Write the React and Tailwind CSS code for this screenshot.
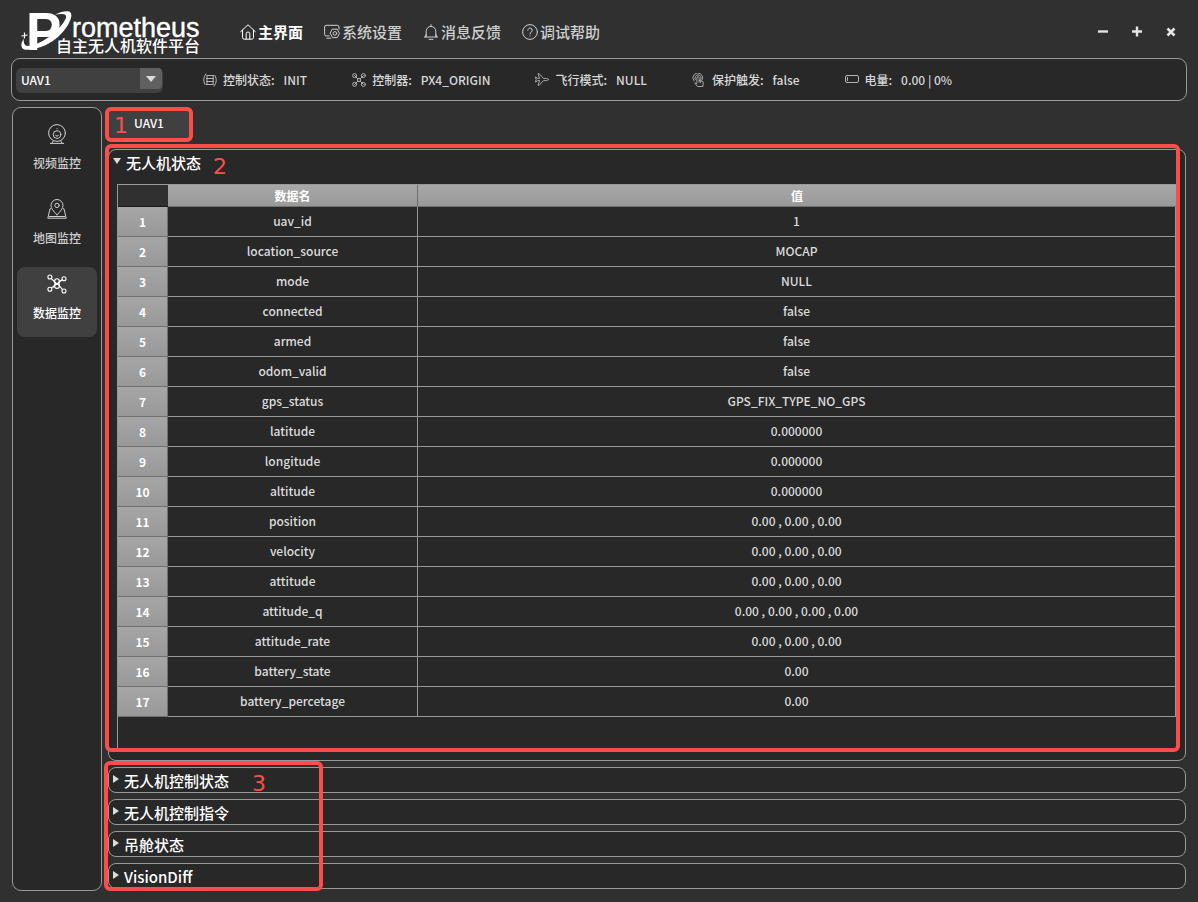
import React, { useState } from "react";

const rows = [
  ["uav_id", "1"],
  ["location_source", "MOCAP"],
  ["mode", "NULL"],
  ["connected", "false"],
  ["armed", "false"],
  ["odom_valid", "false"],
  ["gps_status", "GPS_FIX_TYPE_NO_GPS"],
  ["latitude", "0.000000"],
  ["longitude", "0.000000"],
  ["altitude", "0.000000"],
  ["position", "0.00 , 0.00 , 0.00"],
  ["velocity", "0.00 , 0.00 , 0.00"],
  ["attitude", "0.00 , 0.00 , 0.00"],
  ["attitude_q", "0.00 , 0.00 , 0.00 , 0.00"],
  ["attitude_rate", "0.00 , 0.00 , 0.00"],
  ["battery_state", "0.00"],
  ["battery_percetage", "0.00"],
];

function Icon({ className, box = 16, width = 1, children }) {
  return (
    <svg
      className={className}
      viewBox={`0 0 ${box} ${box}`}
      fill="none"
      stroke="currentColor"
      strokeWidth={width}
      strokeLinecap="round"
      strokeLinejoin="round"
      aria-hidden="true"
    >
      {children}
    </svg>
  );
}

const HomeIcon = () => (
  <Icon className="size-4 shrink-0">
    <path d="M0.7 7.6 8 0.8l7.3 6.8M2.5 6.2v7.2q0 1.8 1.8 1.8h7.4q1.8 0 1.8-1.8V6.2" />
    <path d="M6.2 15V9.6q0-1.6 1.8-1.6t1.8 1.6V15" />
  </Icon>
);

const SettingsIcon = () => (
  <Icon className="size-4 shrink-0">
    <path d="M15 5.2V3q0-1.7-1.7-1.7H2.2Q.6 1.3.6 3v7.2q0 1.7 1.6 1.7h3M2.8 14.2h4" />
    <path d="M8.6 5.2h4.6l2.3 4.2-2.3 4.2H8.6L6.3 9.4z" />
    <circle cx="10.9" cy="9.4" r="1.8" />
  </Icon>
);

const BellIcon = () => (
  <Icon className="size-4 shrink-0">
    <path d="M1.8 13h12.4M3.2 13V7.2a4.8 4.8 0 0 1 9.6 0V13M8 2.2V.7M3.2 10.5 1.8 13M12.8 10.5l1.4 2.5M6 15.3h4" />
  </Icon>
);

const HelpIcon = () => (
  <Icon className="size-4 shrink-0">
    <circle cx="8" cy="8" r="7.4" />
    <path d="M5.8 6.2a2.2 2.2 0 1 1 3.5 1.8Q8 8.8 8 10M8 11.9v.2" />
  </Icon>
);

const statusIcon = "size-3.5 shrink-0 text-[#b4b4b4]";

const ControlStateIcon = () => (
  <Icon className={statusIcon} box={14}>
    <path d="M4.2 2.500h6.600M3.500 5.500h7M3.500 8.500h7M3.200 11.500h6.600M4 2.500v9M10.200 2.500v9" />
    <path d="M3 .8Q-1.200 6 2 11.500M11 13.200Q15.200 8 12 2.500" />
  </Icon>
);

const DroneIcon = () => (
  <Icon className={statusIcon} box={14}>
    <circle cx="2.6" cy="2.6" r="2" />
    <circle cx="11.4" cy="2.6" r="2" />
    <circle cx="2.6" cy="11.4" r="2" />
    <circle cx="11.4" cy="11.4" r="2" />
    <path d="m2.6 2.6 3 3h2.8l3-3M2.6 11.4l3-3h2.8l3 3M5.6 5.6v2.8M8.4 5.6v2.8" />
  </Icon>
);

const PlaneIcon = () => (
  <Icon className={statusIcon} box={14} width={0.9}>
    <path d="M13.5 6.500q-.8-1.100-2.200-1.100H8.400L4.200.7H3l1.600 4.700H2.400L1.100 4H.4L1.200 6.500.4 9h.7l1.300-1.400h2.200L3 12.300h1.200l4.200-4.700h2.900q1.400 0 2.200-1.100z" />
  </Icon>
);

const TouchIcon = () => (
  <Icon className={statusIcon} box={14} width={0.9}>
    <path d="M4.900 9.500V4.700a1.100 1.100 0 0 1 2.200 0V7.400l3 .8q1.300.4 1.200 1.700l-.4 3.600H5.600L2.800 10.200q.8-1 2.100.5" />
    <path d="M3.300 6.500a3.100 3.100 0 1 1 5.400 0M2 8A4.900 4.900 0 1 1 10.200 7" />
    <path d="M7.100 7.400v2M8.700 7.900v1.800" />
  </Icon>
);

const BatteryIcon = () => (
  <Icon className={statusIcon} box={14}>
    <rect x="0.5" y="2.500" width="13" height="7" rx="1.5" />
    <path d="M2.5 4.500v3" />
  </Icon>
);

const CameraIcon = () => (
  <Icon className="size-5" box={20}>
    <circle cx="10" cy="9" r="8.4" />
    <circle cx="10" cy="10.6" r="3.8" />
    <path d="M8.600 11.200a1.500 1.500 0 0 0 2.800 0M10 4.600v.2M6.2 17l-1.4 2.3M13.8 17l1.4 2.3M3.4 19.4h13.2" />
  </Icon>
);

const MapIcon = () => (
  <Icon className="size-5" box={20}>
    <path d="M10 15.8Q4 10.2 4 6.5a6 6 0 0 1 12 0q0 3.700-6 9.300z" />
    <circle cx="10" cy="6.4" r="2.2" />
    <path d="M3.600 9.8H3L.8 19.2h18.400L17 9.8h-.6M2.400 17.500h15.200" />
  </Icon>
);

const DataIcon = () => (
  <Icon className="size-5" box={20} width={1.1}>
    <circle cx="2.9" cy="3" r="2" />
    <circle cx="17" cy="4.8" r="2" />
    <circle cx="2.9" cy="15.2" r="2" />
    <circle cx="17" cy="17" r="2" />
    <circle cx="10" cy="7.2" r="2.4" />
    <circle cx="10" cy="12" r="2.4" />
    <path d="M4.300 4.400 8 8.400l4 3 3.500 4.200M15.200 5.800 12 8.200l-4 3-3.500 2.700M6.800 6.500l1.200 2v2.700l-1.200 2M13.200 6.500l-1.200 2v2.700l1.200 2" />
  </Icon>
);

function Logo() {
  return (
    <svg
      className="h-11 w-[182px] shrink-0 overflow-visible fill-white"
      viewBox="20 10 182 44"
      role="img"
      aria-label="Prometheus 自主无人机软件平台"
    >
      <text x="26" y="50" className="font-['Liberation_Sans',sans-serif] text-[53px] font-bold">P</text>
      <path d="M55 14.500Q64 10 69.500 11.500 74 14 68 25 60 38 46 45 32 51 24 49.500 18.500 46 24 38.500 22.500 44.500 27 46 36 46 49 37 62 27 66 18 67 14 62 14 58 14 55 14.500z" />
      <path d="M24.500 32.500v6M21.500 36l6-1" stroke="white" strokeWidth="1.200" />
      <text x="72" y="37" className="font-['Liberation_Sans',sans-serif] text-[27px]" stroke="white" strokeWidth="0.4">rometheus</text>
      <text x="56" y="52" className="font-['Noto_Sans_CJK_SC',sans-serif] text-[16px] font-medium">自主无人机软件平台</text>
    </svg>
  );
}

const navItems = [
  { label: "主界面", icon: HomeIcon, active: true },
  { label: "系统设置", icon: SettingsIcon },
  { label: "消息反馈", icon: BellIcon },
  { label: "调试帮助", icon: HelpIcon },
];

const statusItems = [
  { label: "控制状态:", value: "INIT", icon: ControlStateIcon },
  { label: "控制器:", value: "PX4_ORIGIN", icon: DroneIcon },
  { label: "飞行模式:", value: "NULL", icon: PlaneIcon },
  { label: "保护触发:", value: "false", icon: TouchIcon },
  { label: "电量:", value: "0.00 | 0%", icon: BatteryIcon },
];

const sideItems = [
  { label: "视频监控", icon: CameraIcon },
  { label: "地图监控", icon: MapIcon },
  { label: "数据监控", icon: DataIcon },
];

const collapsed = ["无人机控制状态", "无人机控制指令", "吊舱状态", "VisionDiff"];

function Header() {
  return (
    <header className="flex h-[58px] items-center pt-1.5 pr-[17px] pl-5">
      <Logo />
      <nav className="ml-[38px] flex gap-[21px]">
        {navItems.map(({ label, icon: NavIcon, active }) => (
          <a
            key={label}
            href="#"
            className={
              active
                ? "flex items-center gap-0.5 text-[15px] font-bold whitespace-nowrap text-white"
                : "flex items-center gap-0.5 text-[15px] font-medium whitespace-nowrap text-[#cfcfcf]"
            }
          >
            <NavIcon />
            {label}
          </a>
        ))}
      </nav>
      <div className="ml-auto flex gap-[14px] text-[#e4e4e4]">
        <button type="button" aria-label="最小化" className="flex size-5 items-center justify-center">
          <Icon className="size-3" box={12} width={2.4}><path strokeLinecap="butt" d="M1 5.500h10" /></Icon>
        </button>
        <button type="button" aria-label="最大化" className="flex size-5 items-center justify-center">
          <Icon className="size-3" box={12} width={2.4}><path strokeLinecap="butt" d="M1 5.500h10M6 .5v10" /></Icon>
        </button>
        <button type="button" aria-label="关闭" className="flex size-5 items-center justify-center">
          <Icon className="size-3" box={12} width={2.6}><path strokeLinecap="butt" d="m2.500 2.500 7 7M9.500 2.500l-7 7" /></Icon>
        </button>
      </div>
    </header>
  );
}

function StatusBar() {
  return (
    <div className="mx-[11px] flex h-[43px] items-center rounded-[9px] border border-[#999] bg-[#282828] pl-1">
      <div className="relative w-[147px] shrink-0">
        <select
          aria-label="UAV"
          className="h-[25px] w-full appearance-none rounded-md bg-[#404040] pl-[5px] text-xs font-medium text-white"
        >
          <option>UAV1</option>
        </select>
        <span className="pointer-events-none absolute top-0.5 right-px flex h-[21px] w-[22px] items-center justify-center rounded-r bg-[#606060]">
          <svg className="h-1.5 w-2.5 fill-[#dcdcdc]" viewBox="0 0 10 6" aria-hidden="true"><path d="M0 0h10L5 6z" /></svg>
        </span>
      </div>
      <dl className="ml-10 flex gap-[45px] text-xs font-medium whitespace-nowrap text-[#d8d8d8]">
        {statusItems.map(({ label, value, icon: StatusIcon }) => (
          <div key={label} className="flex items-center">
            <StatusIcon />
            <dt className="ml-1.5">{label}</dt>
            <dd className="ml-[9px]">{value}</dd>
          </div>
        ))}
      </dl>
    </div>
  );
}

function Sidebar() {
  return (
    <aside className="flex w-[90px] shrink-0 flex-col gap-[5px] rounded-[9px] border border-[#999] bg-[#282828] px-1 py-[9px]">
      {sideItems.map(({ label, icon: SideIcon }, i) => (
        <button
          key={label}
          type="button"
          className={
            i === 2
              ? "flex h-[70px] flex-col items-center rounded-lg bg-[#404040] pt-[7px] text-xs leading-[18px] font-medium text-white"
              : "flex h-[70px] flex-col items-center rounded-lg pt-[7px] text-xs leading-[18px] font-medium text-[#cfcfcf]"
          }
        >
          <SideIcon />
          <span className="mt-2.5">{label}</span>
        </button>
      ))}
    </aside>
  );
}

function DataTable() {
  return (
    <table className="w-full table-fixed border-separate border-spacing-0 text-center text-xs font-medium text-[#dcdcdc]">
      <colgroup>
        <col className="w-[50px]" />
        <col className="w-[250px]" />
        <col />
      </colgroup>
      <thead>
        <tr className="h-[22px] text-white">
          <td className="border-b border-[#1c1c1c] bg-[#303030]" />
          <th scope="col" className="border-r border-b border-[#707070] bg-linear-to-b from-[#a8a8a8] to-[#999] p-0 font-bold">数据名</th>
          <th scope="col" className="border-b border-[#707070] bg-linear-to-b from-[#a8a8a8] to-[#999] p-0 font-bold">值</th>
        </tr>
      </thead>
      <tbody>
        {rows.map(([name, value], i) => (
          <tr key={name} className="h-[30px]">
            <th scope="row" className="border-r border-b border-[#707070] bg-linear-to-b from-[#a6a6a6] to-[#989898] p-0 font-bold text-white">{i + 1}</th>
            <td className="border-r border-b border-[#999] p-0 pb-0.5">{name}</td>
            <td className="border-r border-b border-[#999] p-0 pb-0.5">{value}</td>
          </tr>
        ))}
      </tbody>
    </table>
  );
}

export default function App() {
  const [open, setOpen] = useState(true);
  return (
    <div className="flex min-h-screen flex-col bg-[#303030] pb-[11px] font-['Noto_Sans_CJK_SC',sans-serif]">
      <Header />
      <StatusBar />
      <div className="mx-3 mt-1.5 flex flex-1 gap-[6px]">
        <Sidebar />
        <main className="flex min-w-0 flex-1 flex-col pb-0.5">
          <div className="h-[42px]">
            <div className="relative flex h-[35px] w-[84px] items-center">
              <button type="button" className="h-[31px] w-full rounded-md bg-[#404040] pr-0.5 pb-[3px] text-xs font-medium text-white">UAV1</button>
              <span className="pointer-events-none absolute inset-y-0 -right-px -left-[3px] rounded-md border-4 border-[#fc4d4a]" />
              <span className="pointer-events-none absolute top-[5px] left-1.5 font-['DejaVu_Sans',sans-serif] text-[22px] leading-7 text-[#fc4d4a]">1</span>
            </div>
          </div>
          <section className="relative flex min-h-[612px] flex-1 flex-col rounded-lg border border-[#999] bg-[#282828] px-2 pb-2.5">
            <button
              type="button"
              aria-expanded={open}
              onClick={() => setOpen(!open)}
              className="-ml-1 mb-2 flex h-[26px] items-center gap-[5px] text-[15px] font-medium text-white"
            >
              <svg className="mb-1 h-1.5 w-2 fill-[#dcdcdc]" viewBox="0 0 8 6" aria-hidden="true"><path d="M0 0h8L4 6z" /></svg>
              无人机状态
            </button>
            {open && (
              <div className="flex-1 border border-[#999]">
                <DataTable />
              </div>
            )}
            <span className="pointer-events-none absolute -top-1.5 right-[5px] bottom-2 -left-1 rounded-md border-4 border-[#fc4d4a]" />
            <span className="pointer-events-none absolute top-[3px] left-[104px] font-['DejaVu_Sans',sans-serif] text-[22px] leading-7 text-[#fc4d4a]">2</span>
          </section>
          <div className="relative mt-1.5 flex flex-col gap-1.5">
            {collapsed.map((title) => (
              <button
                key={title}
                type="button"
                aria-expanded="false"
                className="flex h-[26px] items-center gap-[5px] rounded-lg border border-[#999] bg-[#282828] pt-0.5 pl-1 text-[15px] font-medium text-white"
              >
                <svg className="mb-1 h-2 w-1.5 fill-[#dcdcdc]" viewBox="0 0 6 8" aria-hidden="true"><path d="M0 0l6 4-6 4z" /></svg>
                {title}
              </button>
            ))}
            <span className="pointer-events-none absolute -top-1.5 -bottom-0.5 -left-1 w-[219px] rounded-md border-4 border-[#fc4d4a]" />
            <span className="pointer-events-none absolute top-[3px] left-36 font-['DejaVu_Sans',sans-serif] text-[22px] leading-7 text-[#fc4d4a]">3</span>
          </div>
        </main>
      </div>
    </div>
  );
}
